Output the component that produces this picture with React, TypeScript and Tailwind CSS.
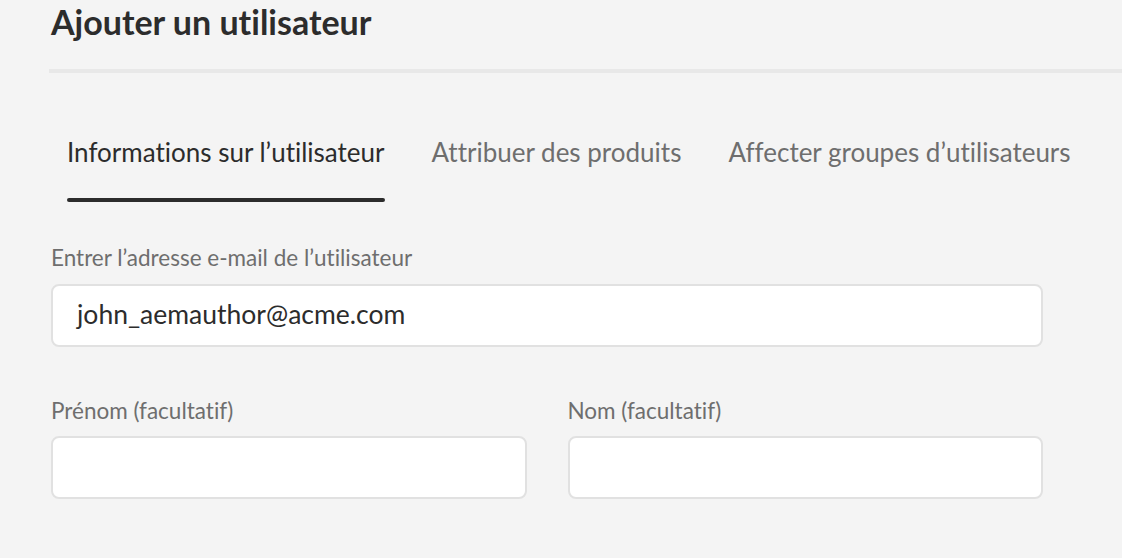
import React from "react";

export default function App() {
  const font = { fontFamily: "Lato, 'Noto Sans', sans-serif" };
  return (
    <div className="w-[1122px] h-[558px] bg-[#f4f4f4] overflow-hidden [font-variant-ligatures:none]" style={font}>
      <div className="pl-[51px] pt-[2px]">
        <h1 className="text-[34px] leading-[40px] font-bold text-[#2c2c2c]">Ajouter un utilisateur</h1>
      </div>
      <div className="ml-[49px] mt-[27px] h-[4px] bg-[#e8e8e8]" />
      <div className="ml-[67px] mt-[61px] flex gap-[47px]">
        <div className="flex flex-col">
          <span className="text-[26px] leading-[36px] text-[#2c2c2c]">Informations sur l’utilisateur</span>
          <span className="mt-[28px] h-[4px] rounded-full bg-[#2c2c2c]" />
        </div>
        <span className="text-[26px] leading-[36px] text-[#6e6e6e]">Attribuer des produits</span>
        <span className="text-[26px] leading-[36px] text-[#6e6e6e]">Affecter groupes d’utilisateurs</span>
      </div>
      <div className="ml-[51px] w-[992px] mt-[43px] flex flex-col">
        <label className="text-[22.5px] leading-[26px] text-[#6e6e6e]">Entrer l’adresse e-mail de l’utilisateur</label>
        <div className="mt-[13px] h-[63px] rounded-[8px] border-2 border-[#e1e1e1] bg-white flex items-center pl-[24px] pb-[4px]">
          <span className="text-[26.5px] leading-[30px] text-[#2c2c2c]">john_aemauthor@acme.com</span>
        </div>
        <div className="mt-[51px] flex gap-[41px]">
          <div className="flex-1 flex flex-col">
            <label className="text-[22.5px] leading-[26px] text-[#6e6e6e]">Prénom (facultatif)</label>
            <div className="mt-[12px] h-[63px] rounded-[8px] border-2 border-[#e1e1e1] bg-white" />
          </div>
          <div className="flex-1 flex flex-col">
            <label className="text-[22.5px] leading-[26px] text-[#6e6e6e]">Nom (facultatif)</label>
            <div className="mt-[12px] h-[63px] rounded-[8px] border-2 border-[#e1e1e1] bg-white" />
          </div>
        </div>
      </div>
    </div>
  );
}
